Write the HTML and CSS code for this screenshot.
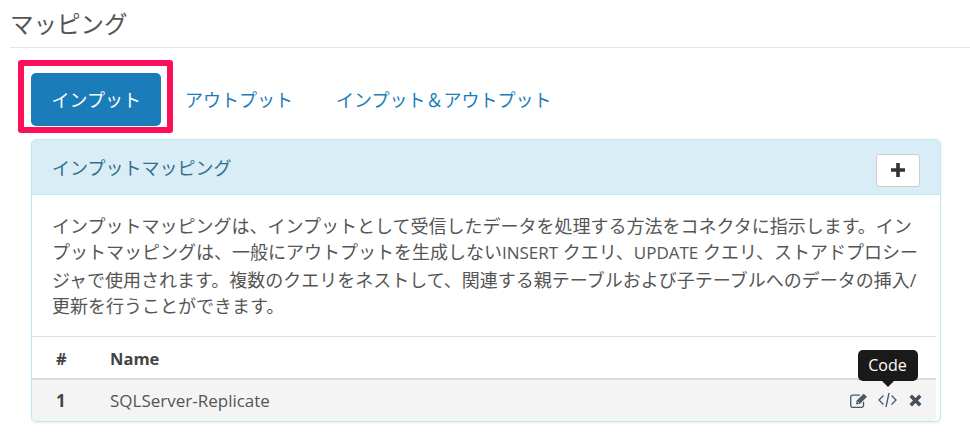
FILE: index.html
```html
<!DOCTYPE html>
<html lang="ja">
  <head>
    <meta charset="UTF-8" />
    <title>マッピング</title>
    <link rel="stylesheet" href="styles.css">
  </head>
  <body>
    <h1 class="page-title">マッピング</h1>

    <ul class="tabs">
      <li class="tab active">インプット<span class="highlight"></span></li>
      <li class="tab">アウトプット</li>
      <li class="tab">インプット＆アウトプット</li>
    </ul>

    <div class="panel">
      <div class="panel-heading">
        <span class="panel-title">インプットマッピング</span>
        <button class="add-btn">
          <svg width="14" height="14" viewBox="0 0 14 14"><path d="M5.200 0h3.600v5.200H14v3.600H8.800V14H5.200V8.800H0V5.200h5.200z" fill="#333"/></svg>
        </button>
      </div>
      <p class="panel-text">
        インプットマッピングは、インプットとして受信したデータを処理する方法をコネクタに指示します。イン<br>
        プットマッピングは、一般にアウトプットを生成しない<span class="latin">INSERT</span> クエリ、<span class="latin">UPDATE</span> クエリ、ストアドプロシー<br>
        ジャで使用されます。複数のクエリをネストして、関連する親テーブルおよび子テーブルへのデータの挿入/<br>
        更新を行うことができます。
      </p>
      <div class="table">
        <div class="table-head">
          <span class="col-num">#</span>
          <span class="col-name">Name</span>
        </div>
        <div class="table-row">
          <span class="col-num">1</span>
          <span class="col-name">SQLServer-Replicate</span>
          <div class="actions">
            <svg class="icon" width="18" height="15" viewBox="0 0 18 15" fill="none">
              <path d="M13.500 8.800V12.500a1.800 1.800 0 0 1-1.800 1.800H2.500A1.800 1.800 0 0 1 .7 12.500V4a1.800 1.800 0 0 1 1.800-1.800H10" stroke="#47586a" stroke-width="1.300"/>
              <path d="M6.500 7.700 13.600.8l3.400 3-7 7-3.800.8z" fill="#47586a"/>
              <path d="M7.600 8.800 9 10" stroke="#fff" stroke-width="1"/>
            </svg>
            <span class="code-wrap">
              <svg class="icon" width="19" height="16" viewBox="0 0 19 16" fill="none" stroke="#47586a" stroke-width="1.300">
                <path d="M5.500 3.500 1 8l4.500 4.500M13.500 3.500 18 8l-4.500 4.500M11 1 8 15"/>
              </svg>
              <span class="tooltip">Code</span>
            </span>
            <svg class="icon close-icon" width="13" height="13" viewBox="0 0 13 13"><path d="M3 .5 6.500 4 10 .5 12.500 3 9 6.500l3.500 3.500-2.500 2.500L6.500 9 3 12.500.5 10 4 6.500.5 3z" fill="#444f5a"/></svg>
          </div>
        </div>
      </div>
    </div>
  </body>
</html>
```

FILE: styles.css
```css
body {
  font-family: "Open Sans", "Noto Sans CJK JP", sans-serif;
  margin: 0;
  padding: 0;
  background: #fff;
  color: #555;
  height: 438px;
  overflow: hidden;
}
.page-title {
  font-size: 23.500px;
  font-weight: 400;
  line-height: 28px;
  margin: 0 0 0 10px;
  padding: 10px 0 9px;
  border-bottom: 1px solid #e5e5e5;
  color: #555;
}
.tabs {
  list-style: none;
  display: flex;
  margin: 25px 0 13px 31px;
  padding: 0;
  height: 53px;
}
.tab {
  font-size: 18px;
  line-height: 55px;
  padding: 0 21.500px;
  color: #1b7dba;
  position: relative;
}
.tab.active {
  background: #1a7cb8;
  color: #fff;
  border-radius: 5px;
  padding: 0 20.500px;
  margin-right: 2px;
}
.highlight {
  position: absolute;
  left: -13px;
  top: -13px;
  width: 143px;
  height: 61px;
  border: 6px solid #fc1059;
  border-radius: 3px;
}
.panel {
  width: 908px;
  margin-left: 31px;
  border: 1px solid #bce8f1;
  border-radius: 5px;
  box-shadow: 0 1px 2px rgba(0, 0, 0, 0.08);
}
.panel-heading {
  display: flex;
  align-items: center;
  justify-content: space-between;
  height: 54px;
  padding: 0 20px;
  background: #d9edf7;
  border-bottom: 1px solid #bce8f1;
  border-radius: 4px 4px 0 0;
}
.panel-title {
  font-size: 18px;
  color: #31708f;
}
.add-btn {
  width: 44px;
  height: 33px;
  margin-top: 6px;
  display: flex;
  align-items: center;
  justify-content: center;
  padding: 0;
  background: #fff;
  border: 1px solid #ccc;
  border-radius: 3px;
}
.panel-text {
  font-size: 18px;
  line-height: 26.400px;
  margin: 0;
  padding: 18px 20px 16px;
  color: #555;
  white-space: nowrap;
}
.latin {
  font-size: 17px;
}
.table {
  width: 904px;
}
.table-head,
.table-row {
  display: flex;
  align-items: center;
}
.table-head {
  height: 39px;
  padding-top: 2px;
  border-top: 1px solid #ddd;
  border-bottom: 2px solid #ddd;
  font-size: 16.500px;
  font-weight: 700;
  color: #444;
}
.table-row {
  height: 41px;
  font-size: 17px;
  background: #f4f4f4;
  border-radius: 0 0 4px 4px;
}
.col-num {
  width: 78px;
  padding-left: 24px;
  box-sizing: border-box;
}
.table-row .col-num {
  font-weight: 700;
  color: #444;
}
.col-name {
  flex: 1;
}
.actions {
  display: flex;
  align-items: center;
  gap: 10px;
  margin-right: 14px;
}
.icon {
  display: block;
}
.close-icon {
  margin-left: 2px;
}
.code-wrap {
  position: relative;
  display: block;
}
.tooltip {
  position: absolute;
  left: 50%;
  bottom: 27px;
  transform: translateX(-50%);
  width: 60px;
  box-sizing: border-box;
  text-align: center;
  background: #1a1a1a;
  color: #fff;
  font-size: 16px;
  line-height: 31px;
  border-radius: 5px;
}
.tooltip::after {
  content: "";
  position: absolute;
  left: 50%;
  bottom: -6px;
  margin-left: -6px;
  border-top: 6px solid #1a1a1a;
  border-left: 6px solid transparent;
  border-right: 6px solid transparent;
}
```
